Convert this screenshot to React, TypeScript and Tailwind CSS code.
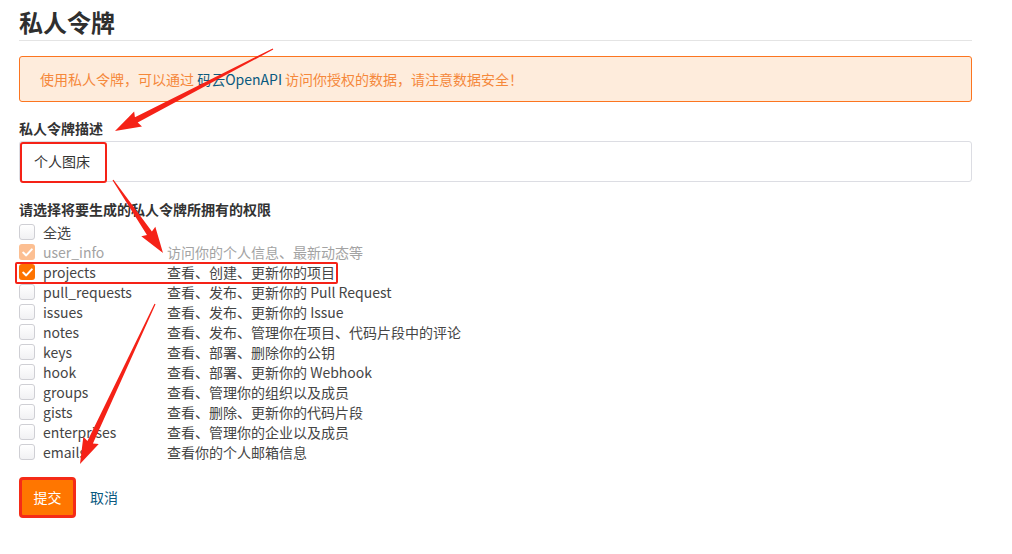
import React from "react";

const PERMS = [
  { key: "全选", desc: "", checked: false, disabled: false },
  { key: "user_info", desc: "访问你的个人信息、最新动态等", checked: true, disabled: true },
  { key: "projects", desc: "查看、创建、更新你的项目", checked: true, disabled: false },
  { key: "pull_requests", desc: "查看、发布、更新你的 Pull Request", checked: false, disabled: false },
  { key: "issues", desc: "查看、发布、更新你的 Issue", checked: false, disabled: false },
  { key: "notes", desc: "查看、发布、管理你在项目、代码片段中的评论", checked: false, disabled: false },
  { key: "keys", desc: "查看、部署、删除你的公钥", checked: false, disabled: false },
  { key: "hook", desc: "查看、部署、更新你的 Webhook", checked: false, disabled: false },
  { key: "groups", desc: "查看、管理你的组织以及成员", checked: false, disabled: false },
  { key: "gists", desc: "查看、删除、更新你的代码片段", checked: false, disabled: false },
  { key: "enterprises", desc: "查看、管理你的企业以及成员", checked: false, disabled: false },
  { key: "emails", desc: "查看你的个人邮箱信息", checked: false, disabled: false },
];

// red annotation arrows drawn over the page
const ARROWS: [number, number, number, number][] = [
  [273, 49, 115, 131],
  [113, 180, 163, 253],
  [155, 304, 80, 464],
];

function arrowPoints(x1: number, y1: number, x2: number, y2: number) {
  const len = Math.hypot(x2 - x1, y2 - y1);
  const dx = (x2 - x1) / len;
  const dy = (y2 - y1) / len;
  const nx = -dy;
  const ny = dx;
  const head = 24;
  const bx = x2 - dx * head;
  const by = y2 - dy * head;
  const w0 = 1.2;
  const w1 = 6;
  const hw = 17;
  const pts = [
    [x1 + (nx * w0) / 2, y1 + (ny * w0) / 2],
    [bx + (nx * w1) / 2, by + (ny * w1) / 2],
    [bx + (nx * hw) / 2 - dx * 2, by + (ny * hw) / 2 - dy * 2],
    [x2, y2],
    [bx - (nx * hw) / 2 - dx * 2, by - (ny * hw) / 2 - dy * 2],
    [bx - (nx * w1) / 2, by - (ny * w1) / 2],
    [x1 - (nx * w0) / 2, y1 - (ny * w0) / 2],
  ];
  return pts.map((p) => p.join(",")).join(" ");
}

const Checkbox: React.FC<{ checked: boolean; disabled: boolean }> = ({ checked, disabled }) => {
  if (checked) {
    return (
      <span
        className={
          "flex w-[16px] h-[16px] rounded-[3px] items-center justify-center " +
          (disabled ? "bg-[#fcbf92]" : "bg-[#fe7300]")
        }
      >
        <svg width="11" height="9" viewBox="0 0 11 9">
          <path d="M1.2 4.6 L4.2 7.4 L9.8 1.4" fill="none" stroke="white" strokeWidth="2" strokeLinecap="round" strokeLinejoin="round" />
        </svg>
      </span>
    );
  }
  return (
    <span className="block w-[16px] h-[16px] rounded-[3px] border border-[#cfcfd4] bg-gradient-to-b from-white to-[#f1f1f3]" />
  );
};

export default function App() {
  return (
    <div className="relative w-[1012px] h-[554px] bg-white overflow-hidden font-['Noto_Sans_CJK_SC','Noto_Sans',sans-serif] text-[#454545]">
      <div className="ml-[19px] w-[953px]">
        <h1 className="pt-[6px] pb-[2px] leading-[32px] text-[24px] font-bold text-[#2f2f2f] border-b border-[#e4e4e4]">
          私人令牌
        </h1>

        <div className="mt-[15px] h-[46px] flex items-center pl-[20px] border border-[#fc7520] rounded-[3px] bg-[#feecdc] text-[14px] text-[#f5883b]">
          使用私人令牌，可以通过&nbsp;<span className="text-[#0b5a7f]">码云OpenAPI</span>&nbsp;访问你授权的数据，请注意数据安全！
        </div>

        <div className="mt-[16px] leading-[20px] text-[14px] font-bold text-[#333]">私人令牌描述</div>
        <div className="mt-[3px] h-[41px] flex items-center pl-[14px] border border-[#dcdde3] rounded-[3px] text-[14px] text-[#333]">
          个人图床
        </div>

        <div className="mt-[17px] leading-[20px] text-[14px] font-bold text-[#333]">请选择将要生成的私人令牌所拥有的权限</div>

        <div className="mt-[3px] flex flex-col">
          {PERMS.map((p) => (
            <div key={p.key} className="flex items-center h-[20px] text-[14px] leading-[20px]">
              <Checkbox checked={p.checked} disabled={p.disabled} />
              <span className={"ml-[8px] w-[124px] " + (p.disabled ? "text-[#a3a3a3]" : "")}>{p.key}</span>
              <span className={p.disabled ? "text-[#a3a3a3]" : ""}>{p.desc}</span>
            </div>
          ))}
        </div>

        <div className="mt-[15px] flex items-center">
          <button className="w-[57px] h-[41px] rounded-[4px] border-[3px] border-[#f52b17] bg-[#ff7600] text-white text-[14px]">
            提交
          </button>
          <span className="ml-[14px] text-[14px] text-[#0b5a7f]">取消</span>
        </div>
      </div>

      {/* annotation boxes */}
      <div className="absolute left-[20px] top-[142px] w-[87px] h-[41px] border-2 border-[#f52217] rounded-[3px]" />
      <div className="absolute left-[15px] top-[262px] w-[323px] h-[22px] border-2 border-[#f52217] rounded-[2px]" />

      <svg className="absolute left-0 top-0" width="1012" height="554">
        {ARROWS.map(([a, b, c, d], i) => (
          <polygon key={i} points={arrowPoints(a, b, c, d)} fill="#f52217" />
        ))}
      </svg>
    </div>
  );
}
